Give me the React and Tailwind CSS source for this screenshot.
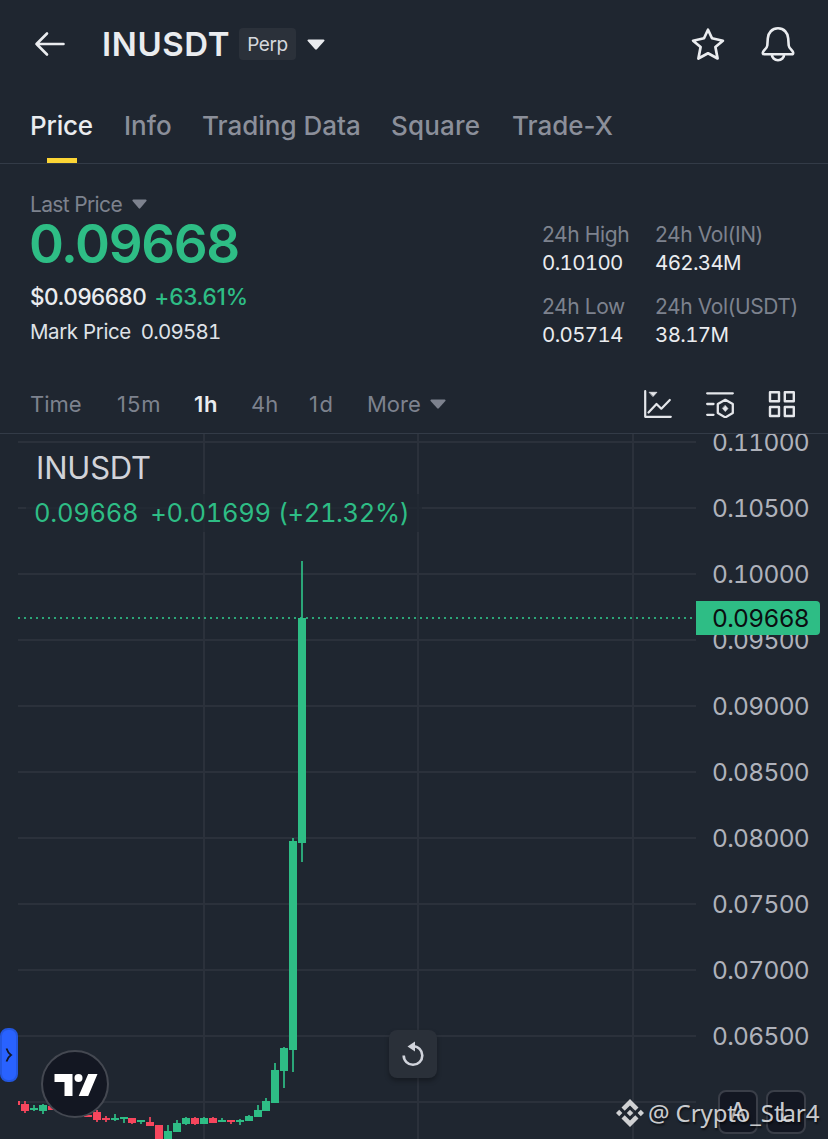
import React from 'react';

const UP = '#2ebd85';
const DOWN = '#f6465d';

const axisLabels = ['0.11000', '0.10500', '0.10000', '0.09500', '0.09000', '0.08500', '0.08000', '0.07500', '0.07000', '0.06500'];

// [x, bodyTop, bodyBottom, wickTop, wickBottom, rising], measured from the top of the chart
const candles = [
  [21, 670, 677, 667, 679, false],
  [30, 674, 676, 671, 677, true],
  [39, 671, 677, 670, 680, true],
  [48, 672, 676, 672, 676, false],
  [84, 681, 683, 681, 683, false],
  [93, 678, 686, 676, 688, false],
  [102, 684, 686, 682, 688, false],
  [111, 684, 686, 680, 687, true],
  [120, 683, 685, 683, 689, true],
  [128, 684, 689, 684, 690, false],
  [137, 686, 688, 686, 690, true],
  [146, 688, 692, 683, 692, false],
  [155, 691, 710, 691, 710, false],
  [164, 697, 710, 691, 710, true],
  [173, 689, 698, 686, 698, true],
  [182, 684, 690, 683, 691, true],
  [191, 684, 690, 683, 691, false],
  [200, 684, 690, 683, 690, true],
  [209, 684, 689, 683, 689, false],
  [218, 686, 688, 684, 688, true],
  [227, 686, 688, 686, 690, false],
  [236, 686, 688, 685, 691, true],
  [245, 682, 687, 681, 687, true],
  [254, 676, 683, 671, 683, true],
  [262, 667, 677, 664, 677, true],
  [271, 636, 669, 629, 669, true],
  [280, 614, 637, 613, 654, true],
  [289, 407, 616, 404, 638, true],
  [298, 184, 409, 127, 428, true],
];

function Caret({ className, w, h }) {
  return (
    <svg className={className} width={w} height={h} viewBox="0 0 18 11" preserveAspectRatio="none">
      <path d="M1.5 0.5h15a1 1 0 0 1 .8 1.6l-7.4 8.2a1.3 1.3 0 0 1-1.8 0L.7 2.1A1 1 0 0 1 1.5.5z" fill="currentColor" />
    </svg>
  );
}

function Header() {
  return (
    <header className="flex h-[88px] items-center pl-[34px] pr-[33px] text-[#eaecef]">
      <svg width="32" height="26" viewBox="0 0 32 26" fill="none" stroke="currentColor" strokeWidth="2.6" strokeLinecap="round" strokeLinejoin="round">
        <path d="M29.5 13H2.5M13 2.500L2.500 13L13 23.500" />
      </svg>
      <h1 className="ml-9 w-[137px] whitespace-nowrap text-[33px] font-semibold leading-[40px] tracking-[0.6px]">INUSDT</h1>
      <span className="flex h-8 w-[57px] items-center justify-center rounded bg-[#2b313a] text-[19px] leading-none tracking-[-0.4px] text-[#d5d8dd]">Perp</span>
      <Caret className="ml-[11px]" w={18} h={11} />
      <svg className="ml-auto" width="36" height="36" viewBox="0 0 36 36" fill="none" stroke="currentColor" strokeWidth="2.7" strokeLinejoin="round">
        <path d="M18 3.700l4 8.600 10.900 2.400-7.500 6.300L27.600 32.500l-9.600-5.200L8.400 32.500l2.200-11.500L3.100 14.700l10.900-2.400z" />
      </svg>
      <svg className="ml-[34px]" width="35" height="38" viewBox="0 0 35 38" fill="none" stroke="currentColor" strokeWidth="2.600" strokeLinejoin="round">
        <path d="M18 3.300c-6 0-9.800 4.500-10.200 10l-.5 7.200c-.2 3-4.500 5-4.500 7.200 0 1 .7 1.600 1.600 1.600h27.200c.9 0 1.600-.6 1.600-1.600 0-2.200-4.300-4.200-4.500-7.200l-.5-7.200c-.4-5.500-4.200-10-10.200-10zM11.800 29.300a6.200 6 0 0 0 12.400 0" />
      </svg>
    </header>
  );
}

function Tabs() {
  return (
    <nav className="flex h-[76px] items-stretch border-b border-[#333b47] pl-[30px] text-[26px] font-medium leading-none text-[#8b8f9a]">
      <div className="relative flex w-[94px] items-center tracking-[-0.2px] text-[#eaecef]">
        Price
        <span className="absolute bottom-0 left-[17px] h-[5px] w-[30px] bg-[#fcd535]" />
      </div>
      <div className="flex w-[78px] items-center">Info</div>
      <div className="flex w-[189px] items-center">Trading Data</div>
      <div className="flex w-[121px] items-center tracking-[0.2px]">Square</div>
      <div className="flex items-center">Trade-X</div>
    </nav>
  );
}

function Stat({ label, value }) {
  return (
    <div className="whitespace-nowrap text-[21px] leading-[28px]">
      <div className="tracking-[-0.4px] text-[#7d828e]">{label}</div>
      <div className="text-[20.5px] tabular-nums tracking-[-0.65px] text-[#eaecef]">{value}</div>
    </div>
  );
}

function Summary() {
  return (
    <section className="flex h-[211px] items-start pl-[30px] pt-[29px]">
      <div className="w-[512px] whitespace-nowrap">
        <div className="flex h-[22px] items-center text-[21px] leading-none tracking-[-0.65px] text-[#7d828e]">
          Last Price
          <Caret className="ml-[10px]" w={15} h={10} />
        </div>
        <div className="-ml-px flex h-[59px] items-center text-[53px] font-semibold leading-none tracking-[-1.4px] text-[#2ebd85]">0.09668</div>
        <div className="flex h-[46px] items-center gap-2 text-[22.5px] font-medium leading-none">
          <span className="tracking-[-0.45px] text-[#eaecef]">$0.096680</span>
          <span className="tracking-[-0.2px] text-[#2ebd85]">+63.61%</span>
        </div>
        <div className="flex h-6 items-center gap-2.5 text-[20.5px] leading-none text-[#dfe2e7]">
          <span className="tracking-[-0.4px]">Mark Price</span>
          <span className="tabular-nums tracking-[-0.8px]">0.09581</span>
        </div>
      </div>
      <div className="grid grid-cols-[113px_auto] gap-y-4 pt-7">
        <Stat label="24h High" value="0.10100" />
        <Stat label="24h Vol(IN)" value="462.34M" />
        <Stat label="24h Low" value="0.05714" />
        <Stat label="24h Vol(USDT)" value="38.17M" />
      </div>
    </section>
  );
}

function Intervals() {
  return (
    <div className="flex h-[59px] items-center border-b border-[#333b47] pl-[30px] pr-[32px] text-[22px] leading-none text-[#7d828e]">
      <span className="w-[86px]">Time</span>
      <span className="w-[78px] pl-px tracking-[1px]">15m</span>
      <span className="w-[57px] font-semibold tracking-[0.8px] text-[#eaecef]">1h</span>
      <span className="w-[58px]">4h</span>
      <span className="w-[58px] tracking-[1.5px]">1d</span>
      <span>More</span>
      <Caret className="ml-[9px]" w={16} h={10} />
      <div className="ml-auto flex items-center gap-[34px] text-[#e4e6ea]">
        <svg width="28" height="28" viewBox="0 0 28 28" fill="none" stroke="currentColor" strokeWidth="2.200" strokeLinecap="round" strokeLinejoin="round">
          <path d="M1.200 1.200v25.600h25.600M4.500 22.500l8-8.500 4.800 4.700 8.500-8.700" />
          <path d="M5.500 2.300h7.400L9.200 6.300z" fill="currentColor" strokeWidth="0.8" />
        </svg>
        <svg width="28" height="28" viewBox="0 0 28 28" fill="none" stroke="currentColor" strokeWidth="2.300" strokeLinecap="round" strokeLinejoin="round">
          <path d="M1.200 3.300h25.600M1.200 14h6.300M1.200 24.800h6.300M19.300 9.800l7.500 4.300v9l-7.500 4.300-7.500-4.300v-9z" />
          <path d="M19.300 15.600l2.700 3-2.700 3-2.700-3z" fill="currentColor" strokeWidth="0.6" />
        </svg>
        <svg width="28" height="28" viewBox="0 0 28 28" fill="none" stroke="currentColor" strokeWidth="2.400" strokeLinejoin="round">
          <path d="M2 2.200h9v9H2zM16.800 2.200h9v9h-9zM2 17h9v9H2zM16.800 17h9v9h-9z" />
        </svg>
      </div>
    </div>
  );
}

function Plot() {
  return (
    <svg className="block shrink-0" width="696" height="705" viewBox="0 0 696 705" shapeRendering="crispEdges">
      {axisLabels.concat('0.06000').map((l, i) => (
        <rect key={l} x="18" y={7 + i * 66} width="678" height="2" fill="#2b313b" />
      ))}
      {[203, 417, 632].map((x) => (
        <rect key={x} x={x} y="0" width="2" height="705" fill="#2b313b" />
      ))}
      <rect x="26" y="60" width="396" height="38" fill="#1f2630" fillOpacity="0.7" />
      <path d="M18 184H694" stroke={UP} strokeOpacity="0.85" strokeWidth="2" strokeDasharray="2 4" />
      <rect x="18" y="667" width="2" height="4" fill={DOWN} />
      {candles.map(([x, top, bottom, high, low, up]) => (
        <g key={x} fill={up ? UP : DOWN}>
          <rect x={x + 3} y={high} width="2" height={low - high} fillOpacity="0.85" />
          <rect x={x} y={top} width="8" height={bottom - top} />
        </g>
      ))}
    </svg>
  );
}

function ScaleButton({ children }) {
  return (
    <div className="flex h-11 w-10 items-center justify-center rounded-lg border-2 border-[#3a3e48] bg-[#131722] text-[26px] leading-none text-[#c8cad0]">{children}</div>
  );
}

function Chart() {
  return (
    <main className="relative flex h-[705px] overflow-hidden">
      <Plot />
      <div className="-mt-[25px] flex w-[132px] flex-col pl-[16px] text-[24.5px] tabular-nums tracking-[-0.7px] text-[#afb2bb]">
        {axisLabels.map((l) => (
          <div key={l} className="h-[66px] leading-[66px]">{l}</div>
        ))}
      </div>

      <div className="absolute left-[34px] top-[14px] whitespace-nowrap">
        <div className="ml-0.5 text-[31px] leading-[40px] tracking-[-0.2px] text-[#d1d3d9]">INUSDT</div>
        <div className="mt-[5px] flex gap-[12px] text-[25.5px] leading-[40px] tabular-nums tracking-[-0.25px] text-[#2ebd85]">
          <span>0.09668</span>
          <span>+0.01699</span>
          <span className="-ml-[5px] tracking-[-0.35px]">(+21.32%)</span>
        </div>
      </div>

      <div className="absolute left-[696px] top-[167px] flex h-[34px] w-[124px] items-center rounded-r bg-[#2ebd85] pl-4 text-[24.5px] leading-none tabular-nums tracking-[-0.7px] text-[#0b0e11]">0.09668</div>

      <div className="absolute left-0 top-[594px] flex h-[54px] w-[18px] items-center justify-center rounded-lg border-2 border-[#2357e0] bg-[#2962ff]">
        <svg width="8" height="16" viewBox="0 0 8 16" fill="none" stroke="#131722" strokeWidth="1.800">
          <path d="M1.500 1.500Q3 6 6 8Q3 10 1.500 14.500" />
        </svg>
      </div>

      <div className="absolute left-[41px] top-[616px] flex h-[68px] w-[68px] items-center justify-center rounded-full border-2 border-[#444851] bg-[#131722]">
        <svg width="44" height="22" viewBox="0 0 44 22" fill="#fff" className="ml-0.5 mt-0.5">
          <path d="M.5 0h18v22h-8V8H.5zM34.200 0h9.300l-9.300 22h-9.500z" />
          <circle cx="24.500" cy="4" r="4" />
        </svg>
      </div>

      <div className="absolute left-[389px] top-[596px] flex h-12 w-12 items-center justify-center rounded-lg bg-[#2a3039] shadow-[0_3px_5px_rgba(0,0,0,0.3)]">
        <svg width="26" height="28" viewBox="0 0 26 28" fill="none">
          <path d="M3.700 15.500a9.300 9.300 0 1 0 9.300-9.300" stroke="#d1d4dc" strokeWidth="2.600" />
          <path d="M15 1.500v10L7.500 6.500z" fill="#d1d4dc" />
        </svg>
      </div>

      <div className="absolute left-[718px] top-[656px] flex gap-2">
        <ScaleButton>A</ScaleButton>
        <ScaleButton>L</ScaleButton>
      </div>

      <div className="absolute left-[616px] top-[663px] flex h-8 items-center whitespace-nowrap font-['Noto_Sans','Open_Sans',sans-serif] text-[24px] leading-[32px] text-[#e3e4e6]/90 [text-shadow:1px_2px_2px_rgba(0,0,0,0.6)]">
        <svg width="28" height="28" viewBox="0 0 28 28" fill="currentColor">
          <path d="M14 0l8.500 8.500-3.200 3.200L14 6.400l-5.300 5.300-3.200-3.200zM14 28l-8.500-8.500 3.200-3.200 5.300 5.300 5.300-5.300 3.200 3.200zM3.200 10.800l3.200 3.200-3.200 3.200L0 14zM24.800 10.800L28 14l-3.200 3.200-3.200-3.200zM14 10.800l3.200 3.200-3.200 3.200-3.200-3.200z" />
        </svg>
        <span className="ml-1 tracking-[-0.1px]">@ Crypto_Star4</span>
      </div>
    </main>
  );
}

export default function App() {
  return (
    <div className="flex h-[1139px] w-[828px] flex-col overflow-hidden bg-[#1f2630] font-['Inter','Liberation_Sans',sans-serif]">
      <Header />
      <Tabs />
      <Summary />
      <Intervals />
      <Chart />
    </div>
  );
}
